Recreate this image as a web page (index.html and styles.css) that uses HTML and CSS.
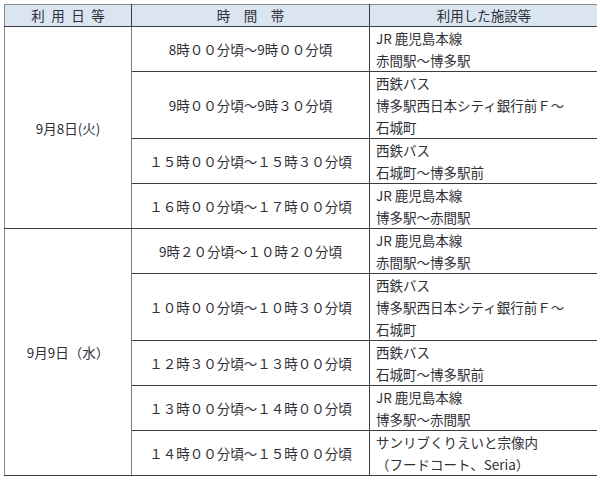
FILE: index.html
```html
<!DOCTYPE html>
<html lang="ja">
<head>
<meta charset="utf-8">
<link rel="stylesheet" href="styles.css">
</head>
<body>
<table class="sched">
  <colgroup>
    <col class="c-day">
    <col class="c-time">
    <col class="c-place">
  </colgroup>
  <thead>
    <tr>
      <th class="h-day">利用日等</th>
      <th class="h-time">時　間　帯</th>
      <th class="h-place">利用した施設等</th>
    </tr>
  </thead>
  <tbody>
    <tr>
      <td class="day" rowspan="4">9月8日(火)</td>
      <td class="time">8時００分頃～9時００分頃</td>
      <td class="place">JR 鹿児島本線<br>赤間駅～博多駅</td>
    </tr>
    <tr>
      <td class="time">9時００分頃～9時３０分頃</td>
      <td class="place">西鉄バス<br>博多駅西日本シティ銀行前Ｆ～<br>石城町</td>
    </tr>
    <tr>
      <td class="time">１５時００分頃～１５時３０分頃</td>
      <td class="place">西鉄バス<br>石城町～博多駅前</td>
    </tr>
    <tr>
      <td class="time">１６時００分頃～１７時００分頃</td>
      <td class="place">JR 鹿児島本線<br>博多駅～赤間駅</td>
    </tr>
    <tr>
      <td class="day" rowspan="5">9月9日（水）</td>
      <td class="time">9時２０分頃～１０時２０分頃</td>
      <td class="place">JR 鹿児島本線<br>赤間駅～博多駅</td>
    </tr>
    <tr>
      <td class="time">１０時００分頃～１０時３０分頃</td>
      <td class="place">西鉄バス<br>博多駅西日本シティ銀行前Ｆ～<br>石城町</td>
    </tr>
    <tr>
      <td class="time">１２時３０分頃～１３時００分頃</td>
      <td class="place">西鉄バス<br>石城町～博多駅前</td>
    </tr>
    <tr>
      <td class="time">１３時００分頃～１４時００分頃</td>
      <td class="place">JR 鹿児島本線<br>博多駅～赤間駅</td>
    </tr>
    <tr>
      <td class="time">１４時００分頃～１５時００分頃</td>
      <td class="place">サンリブくりえいと宗像内<br>（フードコート、Seria）</td>
    </tr>
  </tbody>
</table>
</body>
</html>
```
FILE: styles.css
```css
html, body {
  background: #ffffff;
}
body {
  margin: 4px 3px 0 4px;
  font-family: "Noto Sans CJK JP", "Noto Sans", sans-serif;
  font-size: 13.5px;
  color: #2f2f36;
}
.sched {
  border-collapse: collapse;
  table-layout: fixed;
  width: 594px;
}
.c-day { width: 127px; }
.c-time { width: 238px; }
.c-place { width: 229px; }

.sched th,
.sched td {
  border: 1px solid #3c3c3c;
  padding: 0;
  line-height: 22px;
  font-weight: normal;
}
.sched th {
  background: #dbe5f1;
  height: 21px;
  line-height: 21px;
  text-align: center;
  border-top-color: #8a8a8a;
}
.sched th.h-day {
  letter-spacing: 6.5px;
  text-indent: 6.5px;
  border-left-color: #8a8a8a;
}
.sched td.day {
  text-align: center;
  vertical-align: middle;
  border-left-color: #8a8a8a;
  border-right-color: #7a7a7a;
}
.sched td.time {
  text-align: center;
  vertical-align: middle;
}
.sched td.place {
  text-align: left;
  vertical-align: top;
  padding: 0 4px 0 6px;
}
```
